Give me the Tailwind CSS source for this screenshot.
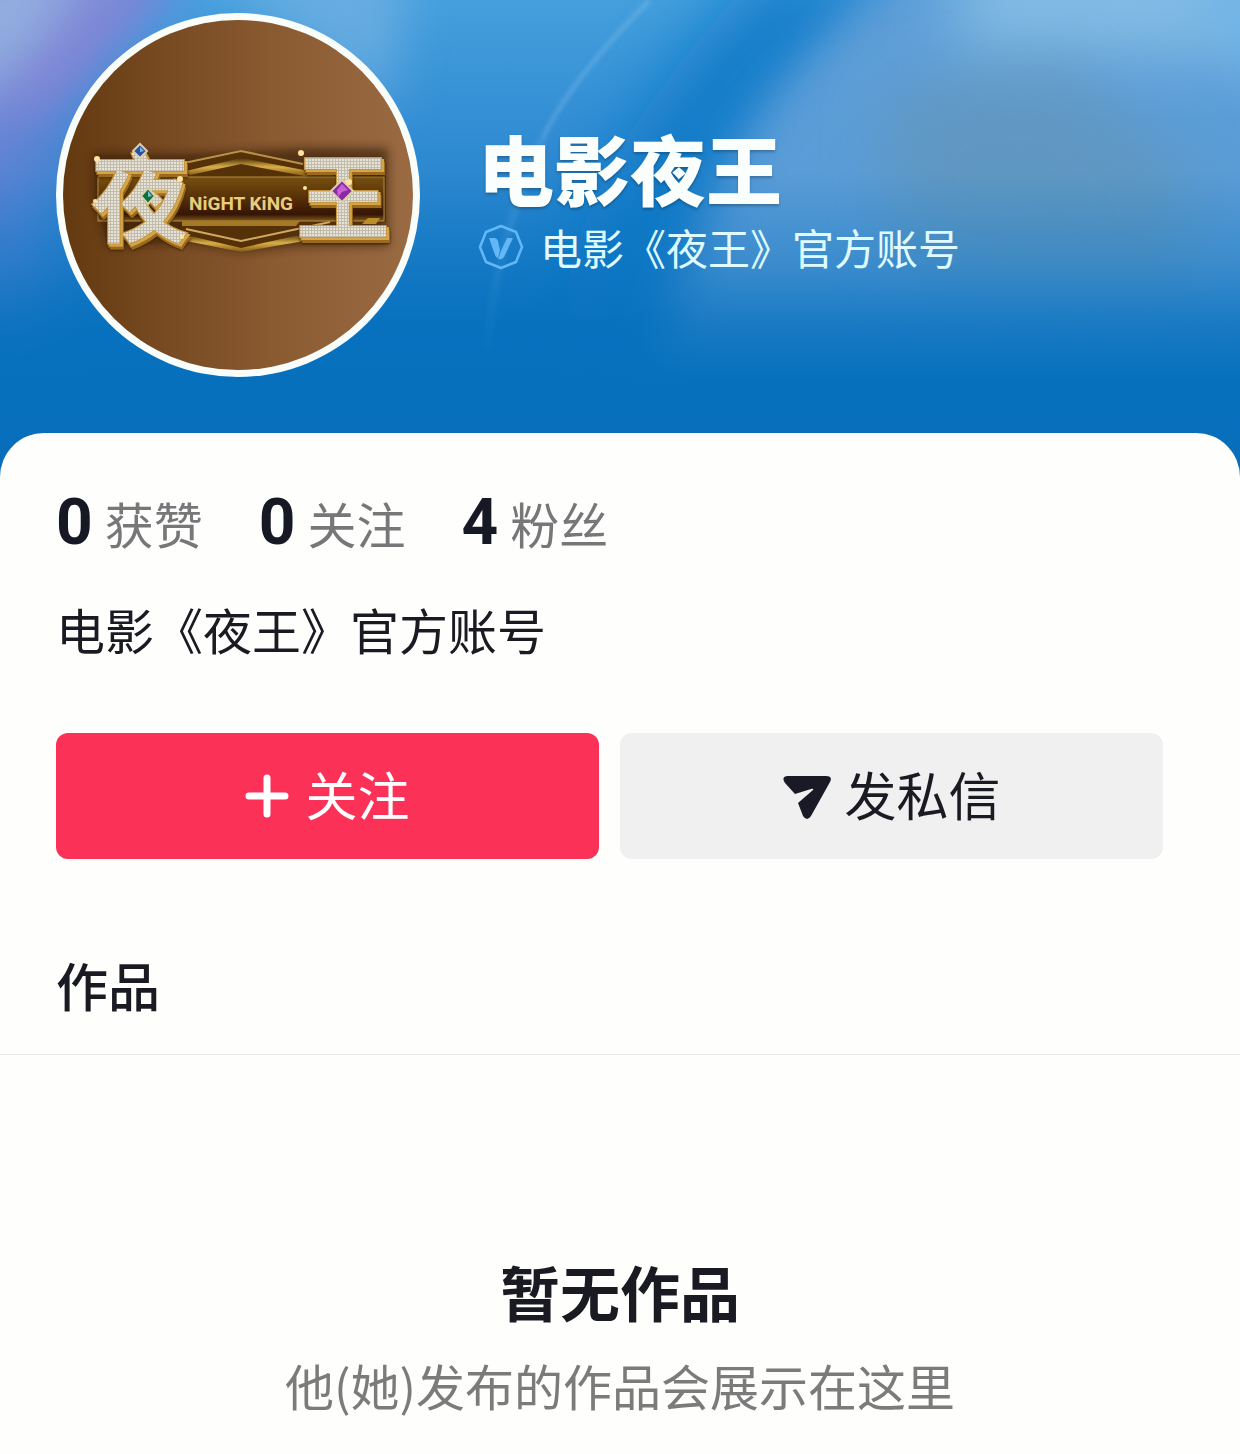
<!DOCTYPE html>
<html lang="zh-CN">
<head>
<meta charset="utf-8">
<meta name="viewport" content="width=device-width, initial-scale=1">
<title>电影夜王</title>
<script src="https://cdn.jsdelivr.net/npm/@tailwindcss/browser@4"></script>
</head>
<body class="min-h-screen bg-[#fefefd] font-['Noto_Sans_CJK_SC',sans-serif] text-[#1a1a22]">
<header class="relative isolate overflow-hidden bg-[#0770c1] pb-[100px] pt-[13px]">
  <!-- Cover art -->
  <svg class="absolute inset-0 -z-10 h-full w-full" viewBox="0 0 1240 477" preserveAspectRatio="none" aria-hidden="true">
    <defs>
      <linearGradient id="base" x1="0" y1="0" x2="0" y2="1">
        <stop offset="0" stop-color="#459fdd"/><stop offset=".3" stop-color="#338dd3"/><stop offset=".55" stop-color="#1f7fca"/><stop offset=".8" stop-color="#0670c0"/><stop offset="1" stop-color="#086dbd"/>
      </linearGradient>
      <linearGradient id="fade" x1="0" y1="0" x2="0" y2="1">
        <stop offset="0" stop-color="#0670bd" stop-opacity="0"/><stop offset=".36" stop-color="#0670bd" stop-opacity=".06"/><stop offset=".55" stop-color="#0670bd" stop-opacity=".4"/><stop offset=".68" stop-color="#0670bd" stop-opacity=".78"/><stop offset=".8" stop-color="#0670bd"/><stop offset="1" stop-color="#086dbb"/>
      </linearGradient>
      <filter id="b12" x="-50%" y="-50%" width="200%" height="200%"><feGaussianBlur stdDeviation="16"/></filter>
      <filter id="b30" x="-50%" y="-50%" width="200%" height="200%"><feGaussianBlur stdDeviation="34"/></filter>
      <filter id="b24" x="-50%" y="-50%" width="200%" height="200%"><feGaussianBlur stdDeviation="24"/></filter>
      <filter id="b2" x="-50%" y="-50%" width="200%" height="200%"><feGaussianBlur stdDeviation="2"/></filter>
    </defs>
    <rect width="1240" height="477" fill="url(#base)"/>
    <path d="M-60-60H190L60 120-60 300Z" fill="#7b80d4" filter="url(#b30)"/>
    <path d="M-60-60H110L40 60-60 150Z" fill="#94b0e0" filter="url(#b30)"/>
    <path d="M120-20H180L70 90 0 150V100Z" fill="#8c83d6" opacity=".45" filter="url(#b12)"/>
    <path d="M-40 130L60 110 40 340-40 360Z" fill="#5a85d6" opacity=".7" filter="url(#b30)"/>
    <path d="M200-40H410L390 110 300 40Z" fill="#76b3e4" opacity=".7" filter="url(#b24)"/>
    <path d="M760-30H960C820 80 740 170 690 300L560 330C570 200 650 90 760-30Z" fill="#0f79c8" opacity=".85" filter="url(#b30)"/>
    <path d="M910-40H1320V460H640C660 330 700 220 750 130Q810 40 910-40Z" fill="#5f9fd9" filter="url(#b24)"/>
    <path d="M960-50H1300V50L960 60Z" fill="#84bde5" filter="url(#b30)"/>
    <path d="M880 90L1060 60 1200 180 1180 300 900 270Z" fill="#6699bd" opacity=".8" filter="url(#b30)"/>
    <path d="M1180-20L1260 100V-20Z" fill="#6eb4e8" opacity=".7" filter="url(#b12)"/>
    <path d="M650 0C600 50 560 100 542 140" fill="none" stroke="#79bcea" stroke-opacity=".5" stroke-width="4" filter="url(#b2)"/>
    <path d="M542 140C510 210 490 290 488 350" fill="none" stroke="#79bcea" stroke-opacity=".2" stroke-width="8" filter="url(#b2)"/>
    <rect width="1240" height="477" fill="url(#fade)"/>
  </svg>

  <div class="flex items-start gap-[58px] px-14">
    <!-- Film logo avatar -->
    <svg class="size-[364px] shrink-0" viewBox="56 13 364 364" role="img" aria-label="夜王 Night King">
      <defs>
        <linearGradient id="brown" x1="0" y1="0" x2="1" y2="0"><stop offset="0" stop-color="#63390f"/><stop offset=".25" stop-color="#754820"/><stop offset=".6" stop-color="#8a5a31"/><stop offset="1" stop-color="#9a6b43"/></linearGradient>
        <linearGradient id="gold" x1="0" y1="0" x2="0" y2="1"><stop offset="0" stop-color="#4c3006"/><stop offset=".5" stop-color="#d9ae49"/><stop offset="1" stop-color="#825711"/></linearGradient>
        <linearGradient id="plate" x1="0" y1="0" x2="0" y2="1"><stop offset="0" stop-color="#75500f"/><stop offset=".45" stop-color="#593208"/><stop offset=".85" stop-color="#351504"/><stop offset="1" stop-color="#80591a"/></linearGradient>
        <pattern id="gems" width="3" height="3" patternUnits="userSpaceOnUse"><rect width="3" height="3" fill="#c4bcaa"/><rect width="2" height="2" fill="#e6e3d8"/></pattern>
        <filter id="shade" x="-20%" y="-30%" width="140%" height="160%"><feGaussianBlur stdDeviation="5"/></filter>
        <filter id="bevel" x="-20%" y="-20%" width="140%" height="140%">
          <feDropShadow dx="2" dy="2" stdDeviation="0" flood-color="#d5a548"/>
          <feDropShadow dx="1" dy="3" stdDeviation="0" flood-color="#9c6a1d"/>
          <feDropShadow dx="0" dy="1" stdDeviation="1" flood-color="#3d2205"/>
        </filter>
      </defs>
      <circle cx="238" cy="195" r="182" fill="#f9fefb"/>
      <circle cx="238" cy="195" r="175" fill="url(#brown)"/>
      <path d="M94 154H182L241 151 300 148H388V246H300L241 252 188 243 108 246 94 200Z" fill="#2c1603" opacity=".6" filter="url(#shade)"/>
      <!-- Hexagonal frame and nameplate -->
      <path d="M182 163L241 150 304 165 386 176V222L304 230 241 252 182 238Z" fill="#553107"/>
      <path d="M184 163L241 151 303 164" fill="none" stroke="#bb9149" stroke-width="2"/>
      <path d="M186 171L241 158 335 176H304L241 164 190 175Z" fill="url(#gold)"/>
      <path d="M186 235L241 248 304 234V241L241 252 186 241Z" fill="url(#gold)"/>
      <path d="M186 229L241 241 330 222" fill="none" stroke="#d0a968" stroke-width="2"/>
      <rect x="98" y="177" width="286" height="44" fill="url(#plate)" stroke="#b38c42"/>
      <path d="M182 221H300L296 226H182Z" fill="#a57824"/>
      <path d="M364 222L368 218H380L376 224H362Z" fill="#ba8c2b"/>
      <text x="189" y="210" font-family="Roboto, sans-serif" font-size="19" font-weight="700" fill="#e8cd7c">NiGHT KiNG</text>
      <!-- Jewelled title characters -->
      <g font-family="Noto Sans CJK SC, sans-serif" font-weight="700" fill="url(#gems)" stroke="#c6953b" stroke-width="2" paint-order="stroke" filter="url(#bevel)">
        <text x="91" y="234" font-size="98">夜</text>
        <text x="296" y="233" font-size="94">王</text>
      </g>
      <g stroke-width="2" stroke="#d9ceb1">
        <path d="M140 144L147 151 140 158 133 151Z" fill="#2853a5"/>
        <path d="M148 188L155 196 148 204 141 196Z" fill="#087238"/>
        <path d="M342 180L353 191 342 202 331 191Z" fill="#8b2aa0"/>
      </g>
      <path d="M140 147L144 151 140 152ZM148 191L152 196 148 197Z" fill="#7fb9d8"/><path d="M342 184L348 190 342 192 338 197 337 190Z" fill="#c75fd6"/>
      <g fill="#ffe3a0"><circle cx="97" cy="159" r="3"/><circle cx="95" cy="201" r="2"/><circle cx="180" cy="179" r="3"/><circle cx="301" cy="153" r="3"/><circle cx="349" cy="182" r="3"/><circle cx="305" cy="188" r="2"/><circle cx="182" cy="237" r="2"/></g>
    </svg>

    <div class="pt-[112px]">
      <h1 class="text-[76px] font-black leading-[84px] text-[#fafffd] text-shadow-[0_2px_3px_rgb(0_0_0/0.25)]">电影夜王</h1>
      <div class="mt-2 flex items-center gap-4 text-[#dffbff]">
        <svg class="size-[46px] shrink-0" viewBox="0 0 46 46" fill="none" aria-hidden="true">
          <path d="M23 2L38 8 44 23 38 38 23 44 8 38 2 23 8 8Z" stroke="#63b7f7" stroke-width="2.6" stroke-linejoin="round"/>
          <path d="M11 14H16Q19 14 20 17L22 26 20 34Q18 34 17 31Z" fill="#63b7f7"/>
          <path d="M29 14H35L26 33Q24 36 20 35L23 27Z" fill="#63b7f7"/>
        </svg>
        <p class="text-[42px] leading-[60px]">电影《夜王》官方账号</p>
      </div>
    </div>
  </div>
</header>

<main class="relative -mt-11 rounded-t-[44px] bg-[#fefefd] pb-[30px] pt-[58px]">
  <section class="pl-14 pr-[77px]">
    <ul class="flex h-[64px] gap-14 text-[49px] leading-[64px] text-[#77777a]">
      <li class="flex items-baseline gap-3"><strong class="font-[Roboto] text-[64px] font-bold text-[#161823]">0</strong>获赞</li>
      <li class="flex items-baseline gap-3"><strong class="font-[Roboto] text-[64px] font-bold text-[#161823]">0</strong>关注</li>
      <li class="flex items-baseline gap-3"><strong class="font-[Roboto] text-[64px] font-bold text-[#161823]">4</strong>粉丝</li>
    </ul>
    <p class="mt-11 text-[49px] leading-[60px]">电影《夜王》官方账号</p>
    <div class="mt-[74px] grid grid-cols-2 gap-[21px] text-[52px] leading-[60px]">
      <button type="button" class="flex h-[126px] items-center justify-center gap-4 rounded-xl bg-[#fc3158] text-white">
        <svg class="size-[44px]" viewBox="0 0 44 44" aria-hidden="true"><path d="M22 4V40M4 22H40" stroke="currentColor" stroke-width="7" stroke-linecap="round"/></svg>
        <span class="pb-1">关注</span>
      </button>
      <button type="button" class="flex h-[126px] items-center justify-center gap-3 rounded-xl bg-[#f0f0f0]">
        <svg class="size-[50px]" viewBox="0 0 50 50" aria-hidden="true"><path d="M5 5H44Q51 5 48 11L29 45Q25 51 21 45L16 32 31 19Q32 17 29 18L13 23 3 12Q-1 6 5 5Z" fill="#1a1a26"/></svg>
        <span class="pb-1">发私信</span>
      </button>
    </div>
  </section>
  <h2 class="mt-24 border-b border-[#e8e8e8] px-14 pb-[39px] text-[52px] font-medium leading-[60px]">作品</h2>
  <section class="pt-[200px] text-center">
    <h3 class="text-[60px] font-bold leading-[72px]">暂无作品</h3>
    <p class="mt-7 text-[49px] leading-[60px] text-[#7b7b7b]">他(她)发布的作品会展示在这里</p>
  </section>
</main>
</body>
</html>
